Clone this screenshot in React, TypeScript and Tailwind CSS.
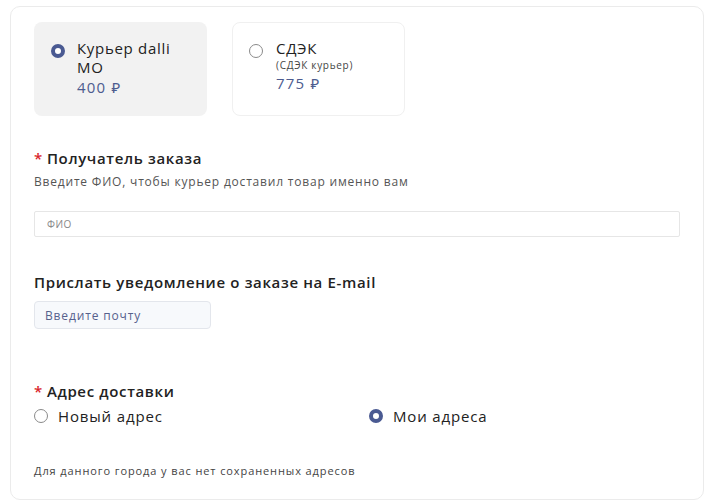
import { useState } from "react";

const font = { fontFamily: '"Open Sans", "Noto Sans", sans-serif' };

const Radio = ({ checked }: { checked: boolean }) =>
    checked ? (
        <span className="inline-block w-[14px] h-[14px] rounded-full border-[4px] border-[#4a5a92] bg-white shrink-0" />
    ) : (
        <span className="inline-block w-[14px] h-[14px] rounded-full border border-[#8a8a8a] bg-white shrink-0" />
    );

const App = () => {
    const [delivery, setDelivery] = useState("dalli");
    const [address, setAddress] = useState("mine");

    return (
        <div className="w-[706px] h-[503px] bg-white pt-[6px] pl-[10px] pr-[2px] pb-[3px]" style={font}>
            <div className="h-full border border-[#ebebeb] rounded-[10px] pl-[23px] pr-[23px] pt-[15px] text-[#222]">
                <div className="flex gap-[25px]">
                    <div
                        onClick={() => setDelivery("dalli")}
                        className={`w-[173px] h-[94px] rounded-[8px] flex gap-[12px] pl-[17px] pt-[17px] cursor-pointer ${delivery === "dalli" ? "bg-[#f2f2f2]" : "bg-white border border-[#f0f0f0]"}`}
                    >
                        <div className="pt-[1px]"><Radio checked={delivery === "dalli"} /></div>
                        <div>
                            <div className="text-[15px] leading-[19px] tracking-[0.7px]">Курьер dalli<br />МО</div>
                            <div className="text-[15px] leading-[19px] mt-[1px] tracking-[1.2px] text-[#4d5c8f]">400 ₽</div>
                        </div>
                    </div>
                    <div
                        onClick={() => setDelivery("cdek")}
                        className={`w-[173px] h-[94px] rounded-[8px] flex gap-[13px] pl-[16px] pt-[16px] cursor-pointer ${delivery === "cdek" ? "bg-[#f2f2f2]" : "bg-white border border-[#f0f0f0]"}`}
                    >
                        <div className="pt-[1px]"><Radio checked={delivery === "cdek"} /></div>
                        <div>
                            <div className="text-[15px] leading-[19px] tracking-[0.7px]">СДЭК</div>
                            <div className="text-[10px] leading-[14px] tracking-[0.7px] text-[#444]">(СДЭК курьер)</div>
                            <div className="text-[15px] leading-[19px] mt-[2px] tracking-[1.2px] text-[#4d5c8f]">775 ₽</div>
                        </div>
                    </div>
                </div>

                <div className="mt-[32px] text-[15px] font-semibold leading-[20px] tracking-[0.65px]">
                    <span className="text-[#d9252b] mr-[4px]">*</span>Получатель заказа
                </div>
                <div className="mt-[6px] text-[12px] leading-[16px] tracking-[0.8px] text-[#555]">Введите ФИО, чтобы курьер доставил товар именно вам</div>
                <input
                    placeholder="ФИО"
                    className="mt-[21px] w-[646px] h-[26px] border border-[#e6e6e6] rounded-[2px] px-[12px] text-[10px] tracking-[0.5px] placeholder:text-[#888] outline-none"
                />

                <div className="mt-[35px] text-[15px] font-semibold leading-[20px] tracking-[0.65px]">Прислать уведомление о заказе на E-mail</div>
                <input
                    placeholder="Введите почту"
                    className="mt-[9px] w-[177px] h-[28px] bg-[#f7f9fc] border border-[#e3e6ec] rounded-[4px] px-[10px] text-[12px] tracking-[0.85px] placeholder:text-[#56618c] outline-none"
                />

                <div className="mt-[52px] text-[15px] font-semibold leading-[20px] tracking-[0.65px]">
                    <span className="text-[#d9252b] mr-[4px]">*</span>Адрес доставки
                </div>
                <div className="mt-[5px] grid grid-cols-2 w-[670px] text-[15px] leading-[20px] tracking-[0.85px]">
                    <label className="flex items-center gap-[10px] cursor-pointer" onClick={() => setAddress("new")}>
                        <Radio checked={address === "new"} />
                        Новый адрес
                    </label>
                    <label className="flex items-center gap-[10px] cursor-pointer" onClick={() => setAddress("mine")}>
                        <Radio checked={address === "mine"} />
                        Мои адреса
                    </label>
                </div>

                <div className="mt-[38px] text-[11px] leading-[14px] tracking-[0.9px] text-[#444]">Для данного города у вас нет сохраненных адресов</div>
            </div>
        </div>
    );
};

export default App;
